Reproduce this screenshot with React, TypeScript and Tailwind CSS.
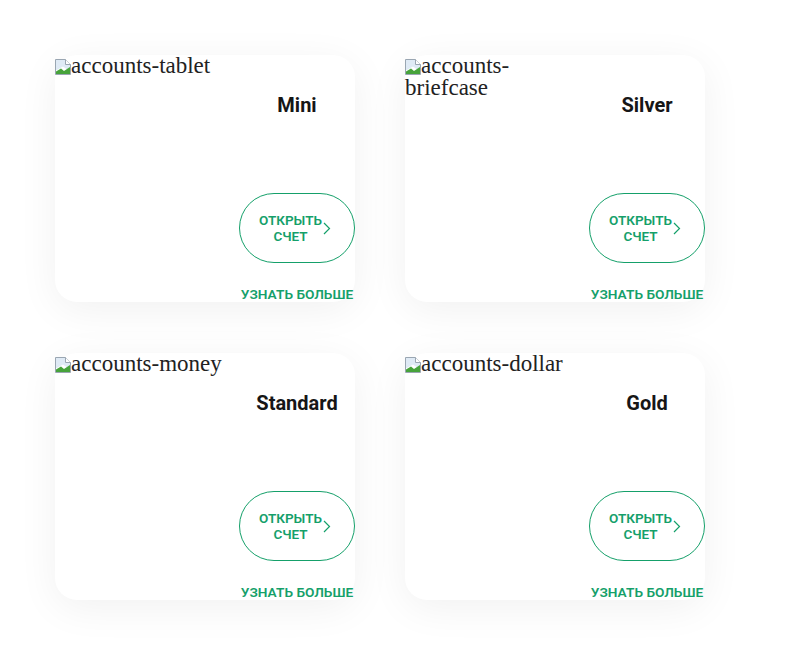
const accounts = [
  { img: "accounts-tablet", title: "Mini" },
  { img: "accounts-briefcase", title: "Silver" },
  { img: "accounts-money", title: "Standard" },
  { img: "accounts-dollar", title: "Gold" },
];

function BrokenImage() {
  return (
    <svg width="16" height="16" viewBox="0 0 16 16" className="inline-block align-[-2px]">
      <path d="M0.5 0.5h10l5 5v10h-15z" fill="#dfeaf5" stroke="#9aa6b2" />
      <path d="M10.5 0.5v5h5" fill="#ffffff" stroke="#9aa6b2" />
      <path d="M1 15V11.5L8 7.5l7 5V15z" fill="#ffffff" />
      <path d="M1 15V12.5L6 9.5l3 2.5 6-4V15z" fill="#47a33b" />
    </svg>
  );
}

function Chevron() {
  return (
    <svg width="8" height="13" viewBox="0 0 8 13" fill="none">
      <path d="M1 1l5.5 5.5L1 12" stroke="#15a06a" strokeWidth="1.2" />
    </svg>
  );
}

function AccountCard({ img, title }: { img: string; title: string }) {
  return (
    <div className="flex h-[247px] w-[300px] rounded-[22px] bg-white shadow-[0_8px_40px_rgba(0,0,0,0.06)]">
      <div className="w-[184px] font-['Liberation_Serif',serif] text-[23px] leading-[22px] text-[#222]">
        <BrokenImage />
        {img}
      </div>
      <div className="flex w-[116px] flex-col items-center font-['Roboto',sans-serif]">
        <div className="mt-[38px] shrink-0 text-[20px] font-bold leading-[24px] text-[#161616]">{title}</div>
        <button className="mt-[76px] flex h-[70px] w-[116px] shrink-0 items-center justify-center gap-[1px] rounded-full border border-[#15a06a] pr-[4px]">
          <span className="text-[13.5px] font-semibold leading-[16px] text-[#15a06a]">
            ОТКРЫТЬ
            <br />
            СЧЕТ
          </span>
          <Chevron />
        </button>
        <a href="#" className="mt-[21px] shrink-0 whitespace-nowrap text-[13.7px] font-semibold text-[#15a06a]">
          УЗНАТЬ БОЛЬШЕ
        </a>
      </div>
    </div>
  );
}

export default function App() {
  return (
    <div className="min-h-[651px] bg-white pl-[55px] pt-[55px]">
      <div className="grid w-max grid-cols-[300px_300px] gap-x-[50px] gap-y-[51px]">
        {accounts.map((a) => (
          <AccountCard key={a.title} img={a.img} title={a.title} />
        ))}
      </div>
    </div>
  );
}
